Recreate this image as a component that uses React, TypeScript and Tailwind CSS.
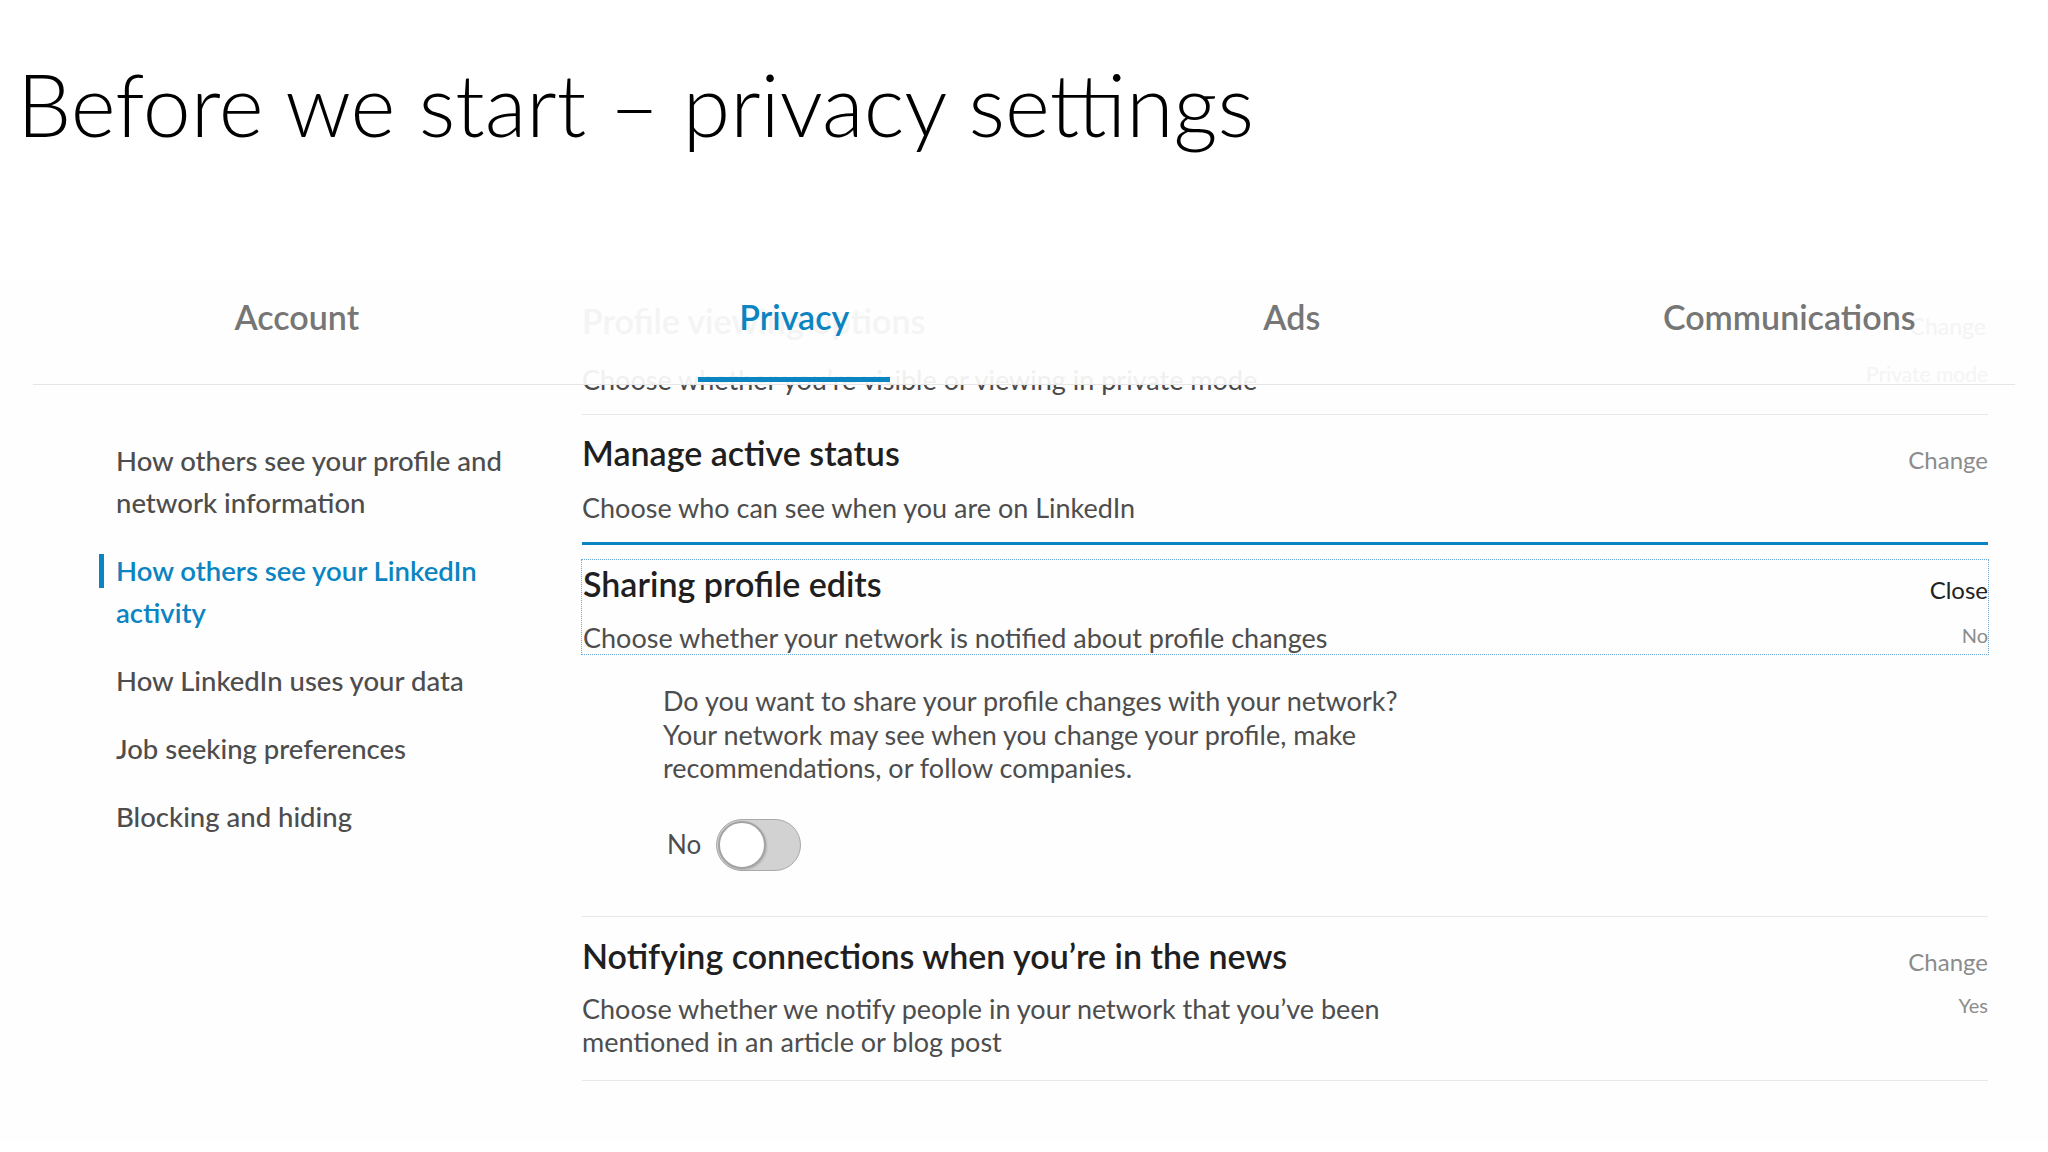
import React from "react";

const navItems = [
  { lines: ["How others see your profile and", "network information"], active: false },
  { lines: ["How others see your LinkedIn", "activity"], active: true },
  { lines: ["How LinkedIn uses your data"], active: false },
  { lines: ["Job seeking preferences"], active: false },
  { lines: ["Blocking and hiding"], active: false },
];

const tabs = ["Account", "Privacy", "Ads", "Communications"];

function Toggle() {
  return (
    <div className="relative h-[52px] w-[85px] rounded-full border border-[#a9a9a9] bg-[#d2d2d2]">
      <div className="absolute left-[1px] top-[1px] h-[48px] w-[48px] rounded-full border-2 border-[#a3a3a3] bg-white shadow-[1px_1px_2px_rgba(0,0,0,0.15)]" />
    </div>
  );
}

export default function App() {
  return (
    <div className="relative h-[1152px] w-[2048px] overflow-hidden bg-white font-['Lato',sans-serif]">
      <h1 className="pl-[17px] pt-[54px] text-[86px] font-light leading-[100px] text-black">
        Before we start – privacy settings
      </h1>

      <div className="mt-[126px] bg-[#fefefe]">
        {/* tab bar */}
        <div className="relative z-10 mx-[33px] border-b border-[#e6e6e6] pb-[2px]">
          <div className="ml-[15px] grid w-[1990px] grid-cols-4">
            {tabs.map((tab) => {
              const active = tab === "Privacy";
              return (
                <div key={tab} className="flex flex-col items-center">
                  <span
                    className={
                      active
                        ? "h-[74px] text-[34px] font-semibold leading-[74px] text-[#0b84c2]"
                        : "h-[74px] text-[34px] font-semibold leading-[74px] text-[#767676]"
                    }
                  >
                    {tab}
                  </span>
                  <span className={active ? "mt-[23px] h-[5px] w-[192px] bg-[#0b84c2]" : "mt-[23px] h-[5px]"} />
                </div>
              );
            })}
          </div>
        </div>

        <div className="flex">
          {/* left nav */}
          <nav className="flex w-[582px] shrink-0 flex-col gap-[26px] pl-[99px] pt-[55px]">
            {navItems.map((item) => (
              <div key={item.lines[0]} className="flex">
                <span className={item.active ? "mt-[4px] h-[34px] w-[5px] bg-[#0b84c2]" : "w-[5px]"} />
                <p
                  className={
                    item.active
                      ? "ml-[12px] text-[27.5px] font-semibold leading-[42px] text-[#0b84c2]"
                      : "ml-[12px] text-[27.5px] font-medium leading-[42px] text-[#4d4d4d]"
                  }
                >
                  {item.lines.map((line) => (
                    <span key={line} className="block">
                      {line}
                    </span>
                  ))}
                </p>
              </div>
            ))}
          </nav>

          {/* settings list */}
          <div className="relative w-[1406px] pb-[60px]">
            {/* leftovers of the previous panel caught mid-transition */}
            <div className="pointer-events-none absolute left-0 right-0 top-0">
              <p className="absolute left-0 top-[-84px] whitespace-nowrap text-[34px] font-semibold leading-[40px] text-[#f4f4f4]">
                Profile viewing options
              </p>
              <p className="absolute left-0 top-[-23px] whitespace-nowrap text-[27px] leading-[36px] text-[#f0f0f0]">
                Choose whether you’re visible or viewing in private mode
              </p>
              <div className="absolute left-0 top-0 h-[16px] overflow-hidden">
                <p className="mt-[-23px] whitespace-nowrap text-[27px] leading-[36px] text-[#4a4a4a]">
                  Choose whether you’re visible or viewing in private mode
                </p>
              </div>
              <p className="absolute right-[2px] top-[-77px] text-[23px] leading-[36px] text-[#f4f4f4]">Change</p>
              <p className="absolute right-0 top-[-27px] text-[21px] leading-[32px] text-[#f4f4f4]">Private mode</p>
            </div>

            <div className="h-[29px]" />

            <div className="flex justify-between border-t border-b-[3px] border-t-[#e8e8e8] border-b-[#0b84c2] pb-[16px] pt-[18px]">
              <div>
                <h2 className="text-[34px] font-semibold leading-[40px] text-[#1f1f1f]">Manage active status</h2>
                <p className="mt-[17px] text-[27px] leading-[36px] text-[#4d4d4d]">
                  Choose who can see when you are on LinkedIn
                </p>
              </div>
              <span className="mt-[7px] text-[24px] leading-[40px] text-[#8c8c8c]">Change</span>
            </div>

            <div className="-mx-[1px] mt-[14px] flex justify-between border border-dotted border-[#6aa6d6] pt-[4px]">
              <div className="pl-[1px]">
                <h2 className="text-[34px] font-semibold leading-[40px] text-[#1f1f1f]">Sharing profile edits</h2>
                <p className="mt-[18px] text-[27px] leading-[32px] text-[#4d4d4d]">
                  Choose whether your network is notified about profile changes
                </p>
              </div>
              <div className="flex flex-col items-end">
                <span className="mt-[6px] text-[24px] leading-[40px] text-[#222]">Close</span>
                <span className="mt-[9px] text-[20px] leading-[32px] text-[#8c8c8c]">No</span>
              </div>
            </div>

            <div className="mt-[29px] pl-[81px] text-[27px] leading-[33.5px] text-[#4d4d4d]">
              <p>Do you want to share your profile changes with your network?</p>
              <p>Your network may see when you change your profile, make</p>
              <p>recommendations, or follow companies.</p>
            </div>

            <div className="mt-[34px] flex items-center pl-[85px]">
              <span className="w-[49px] text-[26px] text-[#4d4d4d]">No</span>
              <Toggle />
            </div>

            <div className="mt-[45px] flex justify-between border-y border-[#e8e8e8] pb-[22px] pt-[19px]">
              <div>
                <h2 className="text-[34px] font-semibold leading-[40px] text-[#1f1f1f]">
                  Notifying connections when you’re in the news
                </h2>
                <p className="mt-[16px] text-[27px] leading-[33px] text-[#4d4d4d]">
                  <span className="block">Choose whether we notify people in your network that you’ve been</span>
                  <span className="block">mentioned in an article or blog post</span>
                </p>
              </div>
              <div className="flex flex-col items-end">
                <span className="mt-[6px] text-[24px] leading-[40px] text-[#8c8c8c]">Change</span>
                <span className="mt-[8px] text-[20px] leading-[30px] text-[#8c8c8c]">Yes</span>
              </div>
            </div>
          </div>
        </div>
      </div>
    </div>
  );
}
